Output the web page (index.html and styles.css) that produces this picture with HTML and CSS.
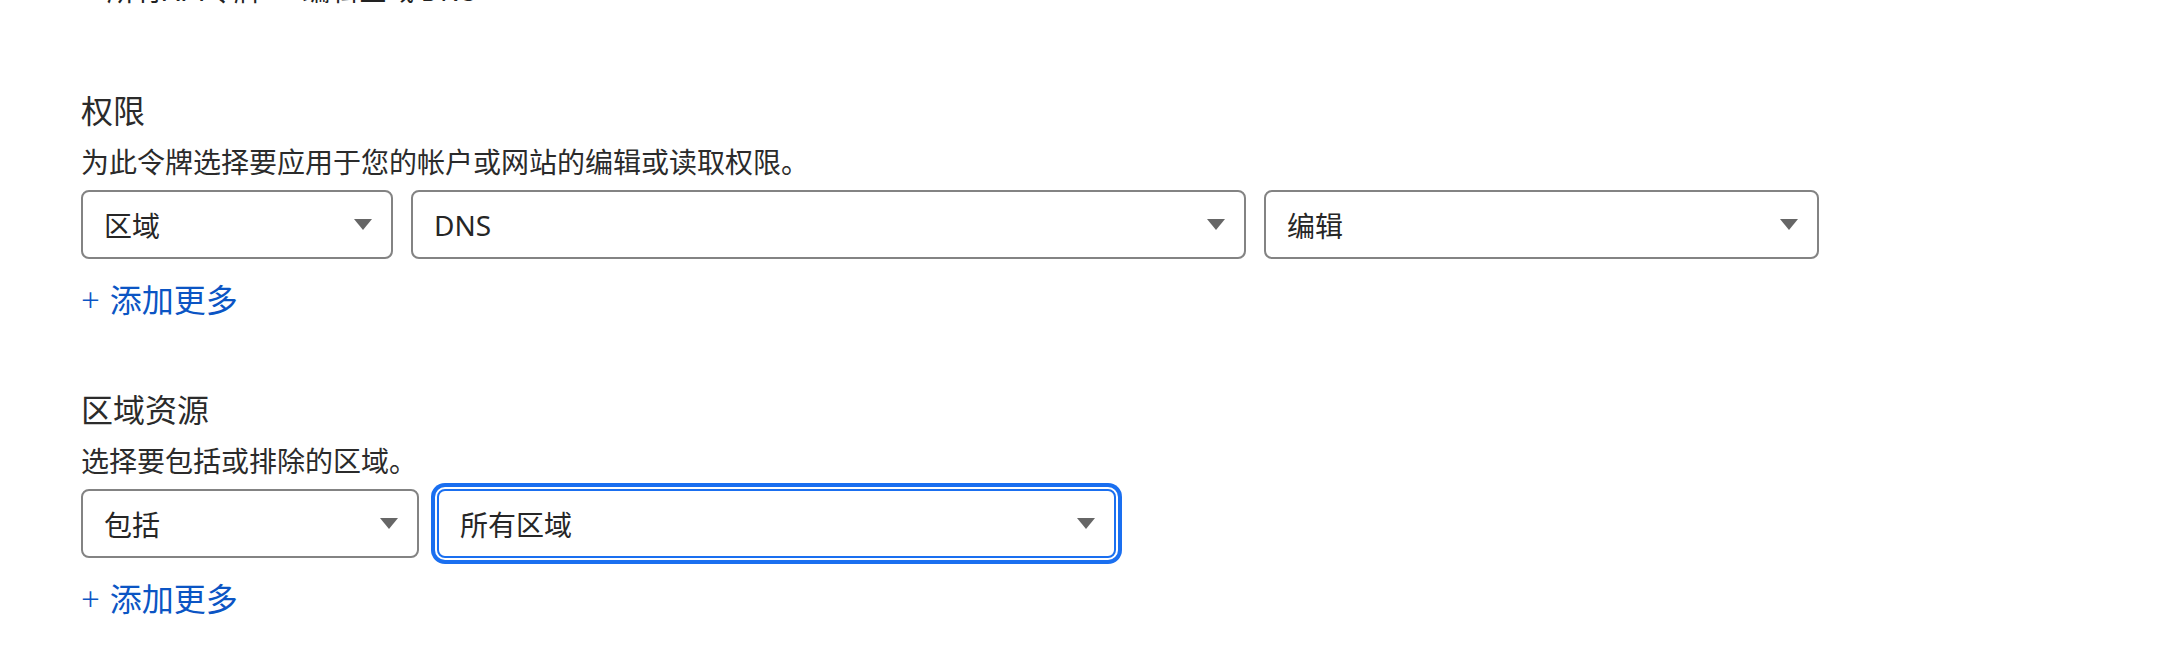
FILE: index.html
```html
<!DOCTYPE html>
<html lang="zh-CN">
<head>
<meta charset="utf-8">
<title>编辑令牌</title>
<link rel="stylesheet" href="styles.css">
</head>
<body>
<div class="page">
  <div class="crumb">‹ 所有API令牌 · 编辑区域 DNS</div>

  <section class="section first">
    <h2 class="title">权限</h2>
    <p class="desc">为此令牌选择要应用于您的帐户或网站的编辑或读取权限。</p>
    <div class="row row-perm">
      <div class="select"><span>区域</span><i class="caret"></i></div>
      <div class="select"><span class="latin">DNS</span><i class="caret"></i></div>
      <div class="select"><span>编辑</span><i class="caret"></i></div>
    </div>
    <a class="add" href="#"><span class="plus">+</span>添加更多</a>
  </section>

  <section class="section">
    <h2 class="title">区域资源</h2>
    <p class="desc">选择要包括或排除的区域。</p>
    <div class="row row-zone">
      <div class="select"><span>包括</span><i class="caret"></i></div>
      <div class="select focused"><span>所有区域</span><i class="caret"></i></div>
    </div>
    <a class="add" href="#"><span class="plus">+</span>添加更多</a>
  </section>
</div>
</body>
</html>
```
FILE: styles.css
```css
* { box-sizing: border-box; }
html, body {
  margin: 0;
  padding: 0;
  background: #ffffff;
}
body {
  font-family: "Noto Sans CJK SC", "Noto Sans", sans-serif;
  color: #313131;
  overflow: hidden;
}
.page {
  padding-left: 81px;
}
.crumb {
  margin-top: -29px;
  padding-left: 11px;
  font-size: 28px;
  line-height: 36px;
  color: #222;
}
.section.first {
  margin-top: 80px;
}
.section + .section {
  margin-top: 66px;
}
.title {
  margin: 0 0 12px;
  font-size: 32px;
  line-height: 44px;
  font-weight: 400;
  color: #2b2b2b;
}
.desc {
  margin: 0 0 11px;
  font-size: 28px;
  line-height: 36px;
  color: #2b2b2b;
}
.row {
  display: grid;
  column-gap: 18px;
}
.row-perm {
  grid-template-columns: 312px 835px 555px;
}
.row-zone {
  grid-template-columns: 338px 679px;
}
.select {
  height: 69px;
  border: 2px solid #838383;
  border-radius: 8px;
  background: #fff;
  display: flex;
  align-items: center;
  justify-content: space-between;
  padding: 0 19px 0 21px;
  font-size: 28px;
  color: #262626;
}
.select .latin {
  font-family: "Noto Sans", "Noto Sans CJK SC", sans-serif;
  font-size: 28px;
}
.caret {
  width: 0;
  height: 0;
  border-left: 9px solid transparent;
  border-right: 9px solid transparent;
  border-top: 11px solid #666;
}
.select.focused {
  border-color: #1a6ff0;
  box-shadow: 0 0 0 2px #fff, 0 0 0 6px #1a6ff0;
}
.add {
  display: inline-block;
  margin-top: 19px;
  font-size: 32px;
  line-height: 40px;
  color: #0b55c4;
  text-decoration: none;
}
.plus {
  font-family: "Noto Sans", sans-serif;
  font-weight: 300;
  font-size: 33px;
  margin-right: 10px;
}
```
